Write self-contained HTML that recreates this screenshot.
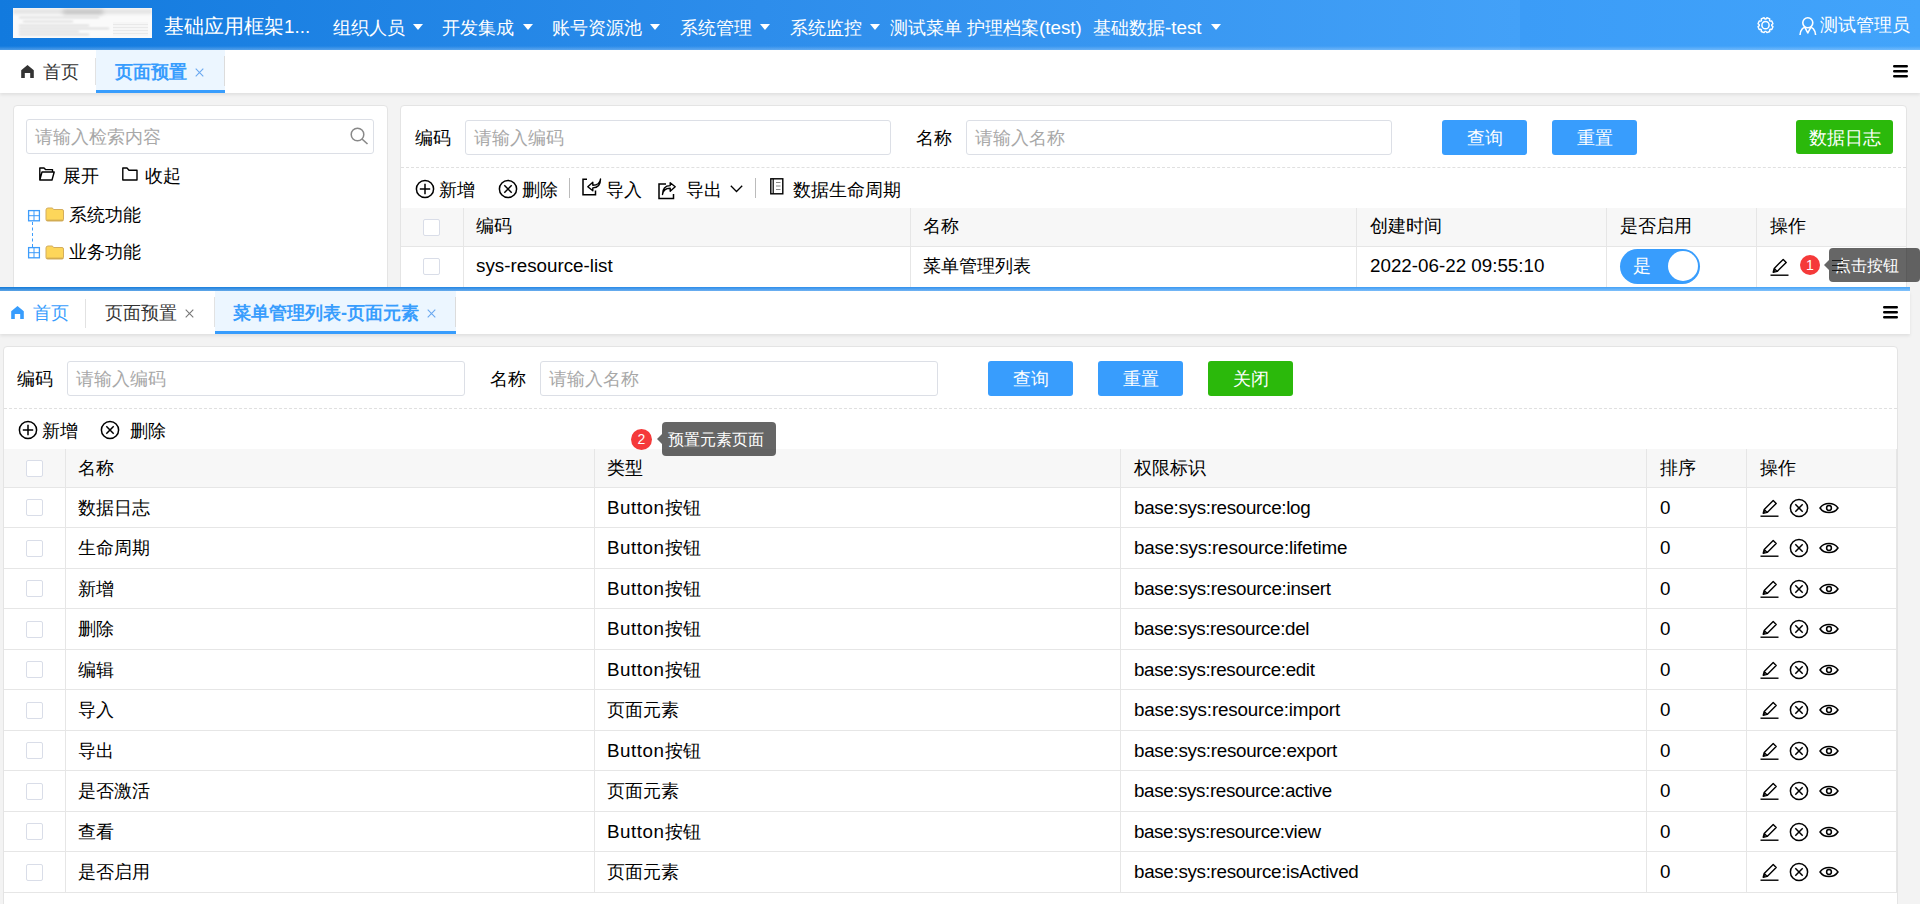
<!DOCTYPE html>
<html><head><meta charset="utf-8">
<style>
*{box-sizing:border-box;margin:0;padding:0}
html,body{width:1920px;height:904px;overflow:hidden;background:#f3f3f3;font-family:"Liberation Sans",sans-serif;font-size:18px;color:#000}
.a{position:absolute;white-space:nowrap}
.ic{position:absolute;overflow:visible}
#hdr{left:0;top:0;width:1920px;height:50px;background:linear-gradient(90deg,#127ade 0px,#2d8deb 760px,#43a1f8 1520px);z-index:3}
#hdr:after{content:'';position:absolute;left:0;top:46px;width:1920px;height:4px;background:linear-gradient(rgba(255,255,255,0),rgba(255,255,255,.25))}
.nav{color:#fff;font-size:18px;top:15.5px;line-height:24px}
.caret{position:absolute;width:0;height:0;border-left:5px solid transparent;border-right:5px solid transparent;border-top:6px solid #fff}
.tabbar{left:0;width:1920px;height:43px;background:#fff;box-shadow:0 2px 3px rgba(0,0,0,.08)}
.card{background:#fff;border:1px solid #e4e4e4;border-radius:4px}
.inp{background:#fff;border:1px solid #dcdfe6;border-radius:3px;height:35px;color:#a8a8a8;font-size:18px;line-height:35.5px;padding-left:7.5px}
.btn{color:#fff;border-radius:3px;height:35px;width:85px;text-align:center;line-height:37px;font-size:18px}
.blue{background:#389dfd}
.green{background:#2bb90b}
.dash{height:0;border-top:1px dashed #e0e0e0}
.th{background:#f7f7f7}
.hl{background:#e6e6e6;height:1px}
.vl{background:#e6e6e6;width:1px}
.cb{width:17px;height:17px;border:1px solid #d9dde8;border-radius:2px;background:#fff}
.tip{background:rgba(0,0,0,.6);color:#fff;border-radius:4px;font-size:16px;line-height:36px;height:34px}
.tip:before{content:'';position:absolute;left:-5px;top:12px;border-top:5px solid transparent;border-bottom:5px solid transparent;border-right:5px solid rgba(0,0,0,.6)}
.tx{line-height:24px;font-size:18px}
.lt{font-size:18.8px}
.badge{background:#f53a3a;color:#fff;border-radius:50%;text-align:center;font-size:14px}
</style></head><body>
<div id="hdr" class="a">
<div class="a" style="left:1520px;top:0;width:400px;height:50px;background:linear-gradient(90deg,#3b9cf7,#42a4fb)"></div>
<div class="a" style="left:13px;top:8px;width:139px;height:30px;background:#fafafa;overflow:hidden"><div class="a" style="left:0;top:1px;width:139px;height:5px;background:#e4e4e4;filter:blur(1.5px)"></div><div class="a" style="left:50px;top:2px;width:40px;height:4px;background:#bbb;filter:blur(2px)"></div><div class="a" style="left:6px;top:9px;width:80px;height:1px;background:#ccc;filter:blur(.8px)"></div><div class="a" style="left:10px;top:13px;width:50px;height:1px;background:#ccc;filter:blur(.8px)"></div><div class="a" style="left:6px;top:17px;width:70px;height:1px;background:#c8c8c8;filter:blur(.8px)"></div><div class="a" style="left:6px;top:20px;width:90px;height:1px;background:#c8c8c8;filter:blur(.8px)"></div><div class="a" style="left:6px;top:23px;width:60px;height:1px;background:#c8c8c8;filter:blur(.8px)"></div><div class="a" style="left:6px;top:26px;width:70px;height:1px;background:#c8c8c8;filter:blur(.8px)"></div><div class="a" style="left:100px;top:14px;width:35px;height:14px;background:repeating-linear-gradient(#f6f6f6 0 2px,#e9e9e9 2px 3px);filter:blur(.5px)"></div></div>
<div class="a nav" style="left:164px;font-size:20px;top:14px">基础应用框架<span class="lt">1...</span></div>
<div class="a nav" style="left:333px">组织人员</div>
<div class="caret" style="left:413px;top:24px"></div>
<div class="a nav" style="left:442px">开发集成</div>
<div class="caret" style="left:523px;top:24px"></div>
<div class="a nav" style="left:552px">账号资源池</div>
<div class="caret" style="left:650px;top:24px"></div>
<div class="a nav" style="left:680px">系统管理</div>
<div class="caret" style="left:760px;top:24px"></div>
<div class="a nav" style="left:790px">系统监控</div>
<div class="caret" style="left:870px;top:24px"></div>
<div class="a nav" style="left:890px">测试菜单 护理档案<span class="lt">(test)</span></div>
<div class="a nav" style="left:1093px">基础数据<span class="lt">-test</span></div>
<div class="caret" style="left:1211px;top:24px"></div>
<svg class="ic" style="left:1757px;top:17px" width="17" height="16" viewBox="0 0 17 16"><path d="M14.68 8.65 L15.96 9.66 L14.80 12.45 L13.19 12.25 L12.55 12.89 L12.75 14.50 L9.96 15.66 L8.95 14.38 L8.05 14.38 L7.04 15.66 L4.25 14.50 L4.45 12.89 L3.81 12.25 L2.20 12.45 L1.04 9.66 L2.32 8.65 L2.32 7.75 L1.04 6.74 L2.20 3.95 L3.81 4.15 L4.45 3.51 L4.25 1.90 L7.04 0.74 L8.05 2.02 L8.95 2.02 L9.96 0.74 L12.75 1.90 L12.55 3.51 L13.19 4.15 L14.80 3.95 L15.96 6.74 L14.68 7.75 Z" fill="none" stroke="#fff" stroke-width="1.4" stroke-linejoin="round"/><circle cx="8.5" cy="8.2" r="3.6" fill="none" stroke="#fff" stroke-width="1.5"/></svg>
<svg class="ic" style="left:1799px;top:17px" width="18" height="19" viewBox="0 0 18 19"><circle cx="8.8" cy="5.8" r="5" fill="none" stroke="#fff" stroke-width="1.6"/><path d="M1 18 C1.5 12 5 10 6 10.6 L8.8 16 L11.6 10.6 C12.6 10 16.1 12 16.6 18" fill="none" stroke="#fff" stroke-width="1.6" stroke-linejoin="round"/></svg>
<div class="a nav" style="left:1820px;top:13px">测试管理员</div>
</div>
<div class="a tabbar" style="top:50px;z-index:2">
<svg class="ic" style="left:21px;top:15px" width="13" height="13" viewBox="0 0 13 13"><path d="M0.2 5.2 L6.5 0 L12.8 5.2 V13 H9.2 V8 H3.8 V13 H0.2 Z" fill="#333"/></svg>
<div class="a tx" style="left:43px;top:10px;color:#333">首页</div>
<div class="a" style="left:95px;top:8px;width:1px;height:27px;background:#e2e2e2"></div>
<div class="a" style="left:96px;top:0;width:129px;height:43px;background:#ecf6ff;border-bottom:3px solid #389dfd"></div>
<div class="a tx" style="left:115px;top:10px;color:#389dfd;font-weight:bold">页面预置</div>
<div class="a" style="left:224px;top:6px;width:1px;height:30px;background:#dcdcdc"></div>
<svg class="ic" style="left:194.5px;top:17.7px" width="9" height="9" viewBox="0 0 9 9"><path d="M0.7 0.7 L8.3 8.3 M8.3 0.7 L0.7 8.3" stroke="#6aa8f0" stroke-width="1.1"/></svg>
<svg class="ic" style="left:1893px;top:15px" width="15" height="13" viewBox="0 0 15 13"><path d="M1.2 1.2 H13.8 M1.2 6.2 H13.8 M1.2 11.2 H13.8" stroke="#000" stroke-width="2.4" stroke-linecap="round"/></svg>
</div>
<div class="a card" style="left:13px;top:105px;width:375px;height:300px"></div>
<div class="a inp" style="left:26px;top:119px;width:348px">请输入检索内容</div>
<svg class="ic" style="left:350px;top:127px" width="18" height="18" viewBox="0 0 18 18"><circle cx="7.5" cy="7.5" r="6.3" fill="none" stroke="#888" stroke-width="1.5"/><path d="M12 12 L17.5 17" stroke="#888" stroke-width="1.6"/></svg>
<svg class="ic" style="left:39px;top:167px" width="16" height="14" viewBox="0 0 16 14"><path d="M0.8 13 V1 H5 L6.5 2.6 H13.5 V5 M0.8 13 L3 5 H15.2 L13 13 Z" fill="none" stroke="#000" stroke-width="1.4" stroke-linejoin="round"/></svg>
<div class="a tx" style="left:63px;top:164px;">展开</div>
<svg class="ic" style="left:122px;top:167px" width="16" height="14" viewBox="0 0 16 14"><path d="M0.8 13 V1 H5 L7 3.2 H15 V13 Z" fill="none" stroke="#000" stroke-width="1.4" stroke-linejoin="round"/></svg>
<div class="a tx" style="left:145px;top:164px;">收起</div>
<svg class="ic" style="left:28px;top:210px" width="12" height="11" viewBox="0 0 12 11"><rect x="0.6" y="0.6" width="10.8" height="10.2" fill="#fff" stroke="#3d9cfb" stroke-width="1.3"/><path d="M6 0.6 V10.8 M0.6 5.7 H11.4" stroke="#3d9cfb" stroke-width="1"/></svg>
<svg class="ic" style="left:28px;top:247px" width="12" height="11" viewBox="0 0 12 11"><rect x="0.6" y="0.6" width="10.8" height="10.2" fill="#fff" stroke="#3d9cfb" stroke-width="1.3"/><path d="M6 0.6 V10.8 M0.6 5.7 H11.4" stroke="#3d9cfb" stroke-width="1"/></svg>
<div class="a" style="left:32px;top:222px;width:0;height:25px;border-left:1px dashed #3d9cfb"></div>
<svg class="ic" style="left:45px;top:207px" width="19" height="15" viewBox="0 0 19 15"><path d="M1 3 Q1 1 3 1 H7 Q8 1 8.5 2.5 H17 Q18.5 2.5 18.5 4 V12.5 Q18.5 14 17 14 H2.5 Q1 14 1 12.5 Z" fill="#fdd65a" stroke="#d4ad5c" stroke-width="1"/><path d="M1.6 13.2 H18" stroke="#c9a24f" stroke-width="1"/></svg>
<svg class="ic" style="left:45px;top:245px" width="19" height="15" viewBox="0 0 19 15"><path d="M1 3 Q1 1 3 1 H7 Q8 1 8.5 2.5 H17 Q18.5 2.5 18.5 4 V12.5 Q18.5 14 17 14 H2.5 Q1 14 1 12.5 Z" fill="#fdd65a" stroke="#d4ad5c" stroke-width="1"/><path d="M1.6 13.2 H18" stroke="#c9a24f" stroke-width="1"/></svg>
<div class="a tx" style="left:69px;top:203px;">系统功能</div>
<div class="a tx" style="left:69px;top:240px;">业务功能</div>
<div class="a card" style="left:400px;top:105px;width:1507px;height:300px"></div>
<div class="a tx" style="left:415px;top:126px;">编码</div>
<div class="a inp" style="left:465px;top:120px;width:426px">请输入编码</div>
<div class="a tx" style="left:916px;top:126px;">名称</div>
<div class="a inp" style="left:966px;top:120px;width:426px">请输入名称</div>
<div class="a btn blue" style="left:1442px;top:120px">查询</div>
<div class="a btn blue" style="left:1552px;top:120px">重置</div>
<div class="a btn green" style="left:1796px;top:120px;width:97px;height:34px;line-height:36px">数据日志</div>
<div class="a dash" style="left:401px;top:167px;width:1505px"></div>
<svg class="ic" style="left:415px;top:179px" width="19" height="19" viewBox="0 0 19 19"><circle cx="10" cy="10" r="8.6" fill="none" stroke="#000" stroke-width="1.5"/><path d="M10 4.8 V15.2 M4.8 10 H15.2" stroke="#000" stroke-width="1.5"/></svg>
<div class="a tx" style="left:439px;top:177.5px;">新增</div>
<svg class="ic" style="left:498px;top:179px" width="19" height="19" viewBox="0 0 19 19"><circle cx="10" cy="10" r="8.6" fill="none" stroke="#000" stroke-width="1.5"/><path d="M6.3 6.3 L13.7 13.7 M13.7 6.3 L6.3 13.7" stroke="#000" stroke-width="1.5"/></svg>
<div class="a tx" style="left:522px;top:177.5px;">删除</div>
<div class="a" style="left:569px;top:178px;width:1px;height:20px;background:#bbb"></div>
<svg class="ic" style="left:582px;top:178px" width="19" height="18" viewBox="0 0 19 18"><path d="M5 1.2 H1 V16.8 H13.5 V12.5" fill="none" stroke="#000" stroke-width="1.5"/><path d="M4.5 12.5 C5 8 8 6.3 12.2 6.3 V9.2 L17.2 4.8 L12.2 0.8 V3.6 C7 3.6 4.5 7 4.5 12.5 Z" transform="translate(23,13.5) rotate(180)" fill="none" stroke="#000" stroke-width="1.4" stroke-linejoin="round"/></svg>
<div class="a tx" style="left:606px;top:177.5px;">导入</div>
<svg class="ic" style="left:658px;top:182px" width="18" height="17" viewBox="0 0 18 17"><path d="M8 2 H1 V16.5 H15.5 V12" fill="none" stroke="#000" stroke-width="1.5"/><path d="M4.5 12.5 C5 8 8 6.3 12.2 6.3 V9.2 L17.2 4.8 L12.2 0.8 V3.6 C7 3.6 4.5 7 4.5 12.5 Z" fill="none" stroke="#000" stroke-width="1.4" stroke-linejoin="round"/></svg>
<div class="a tx" style="left:686px;top:177.5px;">导出</div>
<svg class="ic" style="left:730px;top:185px" width="13" height="8" viewBox="0 0 13 8"><path d="M0.8 0.8 L6.5 6.5 L12.2 0.8" fill="none" stroke="#000" stroke-width="1.3"/></svg>
<div class="a" style="left:755px;top:178px;width:1px;height:20px;background:#bbb"></div>
<svg class="ic" style="left:770px;top:178px" width="14" height="17" viewBox="0 0 14 17"><rect x="0.8" y="0.8" width="12" height="15" fill="none" stroke="#000" stroke-width="1.4"/><path d="M3.2 0.8 V15.8" stroke="#000" stroke-width="1.2"/><path d="M6 4.5 H10.5 M6 8 H10.5 M6 11.5 H10.5" stroke="#888" stroke-width="1.2"/></svg>
<div class="a tx" style="left:793px;top:177.5px;">数据生命周期</div>
<div class="a th" style="left:401px;top:208px;width:1505px;height:39px"></div>
<div class="a hl" style="left:401px;top:246px;width:1505px"></div>
<div class="a vl" style="left:463px;top:208px;height:80px"></div>
<div class="a vl" style="left:910px;top:208px;height:80px"></div>
<div class="a vl" style="left:1356px;top:208px;height:80px"></div>
<div class="a vl" style="left:1606px;top:208px;height:80px"></div>
<div class="a vl" style="left:1756px;top:208px;height:80px"></div>
<div class="a cb" style="left:423px;top:219px"></div>
<div class="a cb" style="left:423px;top:258px"></div>
<div class="a tx" style="left:476px;top:214px;">编码</div>
<div class="a tx" style="left:923px;top:214px;">名称</div>
<div class="a tx" style="left:1370px;top:214px;">创建时间</div>
<div class="a tx" style="left:1620px;top:214px;">是否启用</div>
<div class="a tx" style="left:1770px;top:214px;">操作</div>
<div class="a tx" style="left:476px;top:254px;"><span class="lt">sys-resource-list</span></div>
<div class="a tx" style="left:923px;top:254px;">菜单管理列表</div>
<div class="a tx" style="left:1370px;top:254px;"><span class="lt">2022-06-22 09:55:10</span></div>
<div class="a" style="left:1620px;top:249px;width:80px;height:35px;border-radius:18px;background:#389dfd"></div>
<div class="a" style="left:1668px;top:251px;width:30px;height:30px;border-radius:50%;background:#fff"></div>
<div class="a tx" style="left:1633px;top:254px;color:#fff">是</div>
<svg class="ic" style="left:1769px;top:257px" width="20" height="20" viewBox="0 0 20 20"><path d="M4.2 15.2 L5.2 11.4 L14.2 2.4 L17.2 5.4 L8.2 14.4 Z M5.2 11.4 L8.2 14.4" fill="none" stroke="#000" stroke-width="1.4" stroke-linejoin="round"/><path d="M4.4 15 L5 12.6 L6.8 14.4 Z" fill="#000"/><line x1="1.5" y1="18.2" x2="19.5" y2="18.2" stroke="#000" stroke-width="1.4"/></svg>
<div class="a" style="left:1832px;top:259.5px;width:11px;height:12px;background:linear-gradient(#1a1a1a 0 1.3px,transparent 1.3px 5px,#1a1a1a 5px 6.3px,transparent 6.3px 10px,#1a1a1a 10px 11.3px,transparent 11.3px);z-index:1"></div>
<div class="a badge" style="left:1800px;top:255px;width:20px;height:20px;line-height:20px">1</div>
<div class="a tip" style="left:1829px;top:248px;width:91px;padding-left:6px">点击按钮</div>
<div class="a" style="left:0;top:287px;width:1910px;height:617px;background:#f3f3f3;border-top:4px solid #3f98e8"></div>
<div class="a tabbar" style="top:291px;width:1910px">
<svg class="ic" style="left:11px;top:15px" width="13" height="13" viewBox="0 0 13 13"><path d="M0.2 5.2 L6.5 0 L12.8 5.2 V13 H9.2 V8 H3.8 V13 H0.2 Z" fill="#389dfd"/></svg>
<div class="a tx" style="left:33px;top:10px;color:#389dfd">首页</div>
<div class="a" style="left:85px;top:8px;width:1px;height:29px;background:#e2e2e2"></div>
<div class="a tx" style="left:105px;top:10px;color:#333">页面预置</div>
<svg class="ic" style="left:184.5px;top:17.5px" width="9" height="9" viewBox="0 0 9 9"><path d="M0.7 0.7 L8.3 8.3 M8.3 0.7 L0.7 8.3" stroke="#777" stroke-width="1.1"/></svg>
<div class="a" style="left:214px;top:6px;width:1px;height:30px;background:#e2e2e2"></div>
<div class="a" style="left:215px;top:0;width:241px;height:43px;background:#ecf6ff;border-bottom:3px solid #389dfd"></div>
<div class="a tx" style="left:233px;top:10px;color:#389dfd;font-weight:bold">菜单管理列表-页面元素</div>
<div class="a" style="left:455px;top:6px;width:1px;height:30px;background:#dcdcdc"></div>
<svg class="ic" style="left:426.5px;top:17.5px" width="9" height="9" viewBox="0 0 9 9"><path d="M0.7 0.7 L8.3 8.3 M8.3 0.7 L0.7 8.3" stroke="#6aa8f0" stroke-width="1.1"/></svg>
<svg class="ic" style="left:1883px;top:15px" width="15" height="13" viewBox="0 0 15 13"><path d="M1.2 1.2 H13.8 M1.2 6.2 H13.8 M1.2 11.2 H13.8" stroke="#000" stroke-width="2.4" stroke-linecap="round"/></svg>
</div>
<div class="a card" style="left:3px;top:346px;width:1895px;height:600px"></div>
<div class="a tx" style="left:17px;top:366.5px;">编码</div>
<div class="a inp" style="left:67px;top:361px;width:398px">请输入编码</div>
<div class="a tx" style="left:490px;top:366.5px;">名称</div>
<div class="a inp" style="left:540px;top:361px;width:398px">请输入名称</div>
<div class="a btn blue" style="left:988px;top:361px">查询</div>
<div class="a btn blue" style="left:1098px;top:361px">重置</div>
<div class="a btn green" style="left:1208px;top:361px">关闭</div>
<div class="a dash" style="left:4px;top:408px;width:1893px"></div>
<svg class="ic" style="left:18px;top:420px" width="19" height="19" viewBox="0 0 19 19"><circle cx="10" cy="10" r="8.6" fill="none" stroke="#000" stroke-width="1.5"/><path d="M10 4.8 V15.2 M4.8 10 H15.2" stroke="#000" stroke-width="1.5"/></svg>
<div class="a tx" style="left:42px;top:418.5px;">新增</div>
<svg class="ic" style="left:100px;top:420px" width="19" height="19" viewBox="0 0 19 19"><circle cx="10" cy="10" r="8.6" fill="none" stroke="#000" stroke-width="1.5"/><path d="M6.3 6.3 L13.7 13.7 M13.7 6.3 L6.3 13.7" stroke="#000" stroke-width="1.5"/></svg>
<div class="a tx" style="left:130px;top:418.5px;">删除</div>
<div class="a th" style="left:4px;top:449px;width:1893px;height:38px"></div>
<div class="a hl" style="left:4px;top:487px;width:1893px"></div>
<div class="a hl" style="left:4px;top:527px;width:1893px"></div>
<div class="a hl" style="left:4px;top:568px;width:1893px"></div>
<div class="a hl" style="left:4px;top:608px;width:1893px"></div>
<div class="a hl" style="left:4px;top:649px;width:1893px"></div>
<div class="a hl" style="left:4px;top:689px;width:1893px"></div>
<div class="a hl" style="left:4px;top:730px;width:1893px"></div>
<div class="a hl" style="left:4px;top:770px;width:1893px"></div>
<div class="a hl" style="left:4px;top:811px;width:1893px"></div>
<div class="a hl" style="left:4px;top:851px;width:1893px"></div>
<div class="a hl" style="left:4px;top:892px;width:1893px"></div>
<div class="a vl" style="left:65px;top:449px;height:443px"></div>
<div class="a vl" style="left:594px;top:449px;height:443px"></div>
<div class="a vl" style="left:1120px;top:449px;height:443px"></div>
<div class="a vl" style="left:1646px;top:449px;height:443px"></div>
<div class="a vl" style="left:1746px;top:449px;height:443px"></div>
<div class="a vl" style="left:1896px;top:449px;height:443px"></div>
<div class="a cb" style="left:26px;top:459.5px"></div>
<div class="a tx" style="left:78px;top:456.0px;">名称</div>
<div class="a tx" style="left:607px;top:456.0px;">类型</div>
<div class="a tx" style="left:1134px;top:456.0px;">权限标识</div>
<div class="a tx" style="left:1660px;top:456.0px;">排序</div>
<div class="a tx" style="left:1760px;top:456.0px;">操作</div>
<div class="a cb" style="left:26px;top:499.0px"></div>
<div class="a tx" style="left:78px;top:495.5px;">数据日志</div>
<div class="a tx" style="left:607px;top:495.5px;"><span class="lt" style="letter-spacing:0.55px">Button</span>按钮</div>
<div class="a tx" style="left:1134px;top:495.5px;"><span class="lt" style="letter-spacing:-0.3px">base:sys:resource:log</span></div>
<div class="a tx" style="left:1660px;top:495.5px;font-family:"Liberation Serif",serif;font-size:19px"><span class="lt">0</span></div>
<svg class="ic" style="left:1759px;top:497.5px" width="20" height="20" viewBox="0 0 20 20"><path d="M4.2 15.2 L5.2 11.4 L14.2 2.4 L17.2 5.4 L8.2 14.4 Z M5.2 11.4 L8.2 14.4" fill="none" stroke="#000" stroke-width="1.4" stroke-linejoin="round"/><path d="M4.4 15 L5 12.6 L6.8 14.4 Z" fill="#000"/><line x1="1.5" y1="18.2" x2="19.5" y2="18.2" stroke="#000" stroke-width="1.4"/></svg>
<svg class="ic" style="left:1789px;top:497.5px" width="20" height="20" viewBox="0 0 20 20"><circle cx="10" cy="10" r="8.6" fill="none" stroke="#000" stroke-width="1.5"/><path d="M6.3 6.3 L13.7 13.7 M13.7 6.3 L6.3 13.7" stroke="#000" stroke-width="1.5"/></svg>
<svg class="ic" style="left:1819px;top:497.5px" width="20" height="20" viewBox="0 0 20 20"><path d="M1 10 C5 4 15 4 19 10 C15 16 5 16 1 10 Z" fill="none" stroke="#000" stroke-width="1.5" stroke-linejoin="round"/><circle cx="10" cy="10" r="2.4" fill="none" stroke="#000" stroke-width="1.5"/></svg>
<div class="a cb" style="left:26px;top:539.5px"></div>
<div class="a tx" style="left:78px;top:536.0px;">生命周期</div>
<div class="a tx" style="left:607px;top:536.0px;"><span class="lt" style="letter-spacing:0.55px">Button</span>按钮</div>
<div class="a tx" style="left:1134px;top:536.0px;"><span class="lt" style="letter-spacing:-0.148px">base:sys:resource:lifetime</span></div>
<div class="a tx" style="left:1660px;top:536.0px;font-family:"Liberation Serif",serif;font-size:19px"><span class="lt">0</span></div>
<svg class="ic" style="left:1759px;top:538.0px" width="20" height="20" viewBox="0 0 20 20"><path d="M4.2 15.2 L5.2 11.4 L14.2 2.4 L17.2 5.4 L8.2 14.4 Z M5.2 11.4 L8.2 14.4" fill="none" stroke="#000" stroke-width="1.4" stroke-linejoin="round"/><path d="M4.4 15 L5 12.6 L6.8 14.4 Z" fill="#000"/><line x1="1.5" y1="18.2" x2="19.5" y2="18.2" stroke="#000" stroke-width="1.4"/></svg>
<svg class="ic" style="left:1789px;top:538.0px" width="20" height="20" viewBox="0 0 20 20"><circle cx="10" cy="10" r="8.6" fill="none" stroke="#000" stroke-width="1.5"/><path d="M6.3 6.3 L13.7 13.7 M13.7 6.3 L6.3 13.7" stroke="#000" stroke-width="1.5"/></svg>
<svg class="ic" style="left:1819px;top:538.0px" width="20" height="20" viewBox="0 0 20 20"><path d="M1 10 C5 4 15 4 19 10 C15 16 5 16 1 10 Z" fill="none" stroke="#000" stroke-width="1.5" stroke-linejoin="round"/><circle cx="10" cy="10" r="2.4" fill="none" stroke="#000" stroke-width="1.5"/></svg>
<div class="a cb" style="left:26px;top:580.0px"></div>
<div class="a tx" style="left:78px;top:576.5px;">新增</div>
<div class="a tx" style="left:607px;top:576.5px;"><span class="lt" style="letter-spacing:0.55px">Button</span>按钮</div>
<div class="a tx" style="left:1134px;top:576.5px;"><span class="lt" style="letter-spacing:-0.283px">base:sys:resource:insert</span></div>
<div class="a tx" style="left:1660px;top:576.5px;font-family:"Liberation Serif",serif;font-size:19px"><span class="lt">0</span></div>
<svg class="ic" style="left:1759px;top:578.5px" width="20" height="20" viewBox="0 0 20 20"><path d="M4.2 15.2 L5.2 11.4 L14.2 2.4 L17.2 5.4 L8.2 14.4 Z M5.2 11.4 L8.2 14.4" fill="none" stroke="#000" stroke-width="1.4" stroke-linejoin="round"/><path d="M4.4 15 L5 12.6 L6.8 14.4 Z" fill="#000"/><line x1="1.5" y1="18.2" x2="19.5" y2="18.2" stroke="#000" stroke-width="1.4"/></svg>
<svg class="ic" style="left:1789px;top:578.5px" width="20" height="20" viewBox="0 0 20 20"><circle cx="10" cy="10" r="8.6" fill="none" stroke="#000" stroke-width="1.5"/><path d="M6.3 6.3 L13.7 13.7 M13.7 6.3 L6.3 13.7" stroke="#000" stroke-width="1.5"/></svg>
<svg class="ic" style="left:1819px;top:578.5px" width="20" height="20" viewBox="0 0 20 20"><path d="M1 10 C5 4 15 4 19 10 C15 16 5 16 1 10 Z" fill="none" stroke="#000" stroke-width="1.5" stroke-linejoin="round"/><circle cx="10" cy="10" r="2.4" fill="none" stroke="#000" stroke-width="1.5"/></svg>
<div class="a cb" style="left:26px;top:620.5px"></div>
<div class="a tx" style="left:78px;top:617.0px;">删除</div>
<div class="a tx" style="left:607px;top:617.0px;"><span class="lt" style="letter-spacing:0.55px">Button</span>按钮</div>
<div class="a tx" style="left:1134px;top:617.0px;"><span class="lt" style="letter-spacing:-0.365px">base:sys:resource:del</span></div>
<div class="a tx" style="left:1660px;top:617.0px;font-family:"Liberation Serif",serif;font-size:19px"><span class="lt">0</span></div>
<svg class="ic" style="left:1759px;top:619.0px" width="20" height="20" viewBox="0 0 20 20"><path d="M4.2 15.2 L5.2 11.4 L14.2 2.4 L17.2 5.4 L8.2 14.4 Z M5.2 11.4 L8.2 14.4" fill="none" stroke="#000" stroke-width="1.4" stroke-linejoin="round"/><path d="M4.4 15 L5 12.6 L6.8 14.4 Z" fill="#000"/><line x1="1.5" y1="18.2" x2="19.5" y2="18.2" stroke="#000" stroke-width="1.4"/></svg>
<svg class="ic" style="left:1789px;top:619.0px" width="20" height="20" viewBox="0 0 20 20"><circle cx="10" cy="10" r="8.6" fill="none" stroke="#000" stroke-width="1.5"/><path d="M6.3 6.3 L13.7 13.7 M13.7 6.3 L6.3 13.7" stroke="#000" stroke-width="1.5"/></svg>
<svg class="ic" style="left:1819px;top:619.0px" width="20" height="20" viewBox="0 0 20 20"><path d="M1 10 C5 4 15 4 19 10 C15 16 5 16 1 10 Z" fill="none" stroke="#000" stroke-width="1.5" stroke-linejoin="round"/><circle cx="10" cy="10" r="2.4" fill="none" stroke="#000" stroke-width="1.5"/></svg>
<div class="a cb" style="left:26px;top:661.0px"></div>
<div class="a tx" style="left:78px;top:657.5px;">编辑</div>
<div class="a tx" style="left:607px;top:657.5px;"><span class="lt" style="letter-spacing:0.55px">Button</span>按钮</div>
<div class="a tx" style="left:1134px;top:657.5px;"><span class="lt" style="letter-spacing:-0.333px">base:sys:resource:edit</span></div>
<div class="a tx" style="left:1660px;top:657.5px;font-family:"Liberation Serif",serif;font-size:19px"><span class="lt">0</span></div>
<svg class="ic" style="left:1759px;top:659.5px" width="20" height="20" viewBox="0 0 20 20"><path d="M4.2 15.2 L5.2 11.4 L14.2 2.4 L17.2 5.4 L8.2 14.4 Z M5.2 11.4 L8.2 14.4" fill="none" stroke="#000" stroke-width="1.4" stroke-linejoin="round"/><path d="M4.4 15 L5 12.6 L6.8 14.4 Z" fill="#000"/><line x1="1.5" y1="18.2" x2="19.5" y2="18.2" stroke="#000" stroke-width="1.4"/></svg>
<svg class="ic" style="left:1789px;top:659.5px" width="20" height="20" viewBox="0 0 20 20"><circle cx="10" cy="10" r="8.6" fill="none" stroke="#000" stroke-width="1.5"/><path d="M6.3 6.3 L13.7 13.7 M13.7 6.3 L6.3 13.7" stroke="#000" stroke-width="1.5"/></svg>
<svg class="ic" style="left:1819px;top:659.5px" width="20" height="20" viewBox="0 0 20 20"><path d="M1 10 C5 4 15 4 19 10 C15 16 5 16 1 10 Z" fill="none" stroke="#000" stroke-width="1.5" stroke-linejoin="round"/><circle cx="10" cy="10" r="2.4" fill="none" stroke="#000" stroke-width="1.5"/></svg>
<div class="a cb" style="left:26px;top:701.5px"></div>
<div class="a tx" style="left:78px;top:698.0px;">导入</div>
<div class="a tx" style="left:607px;top:698.0px;">页面元素</div>
<div class="a tx" style="left:1134px;top:698.0px;"><span class="lt" style="letter-spacing:-0.161px">base:sys:resource:import</span></div>
<div class="a tx" style="left:1660px;top:698.0px;font-family:"Liberation Serif",serif;font-size:19px"><span class="lt">0</span></div>
<svg class="ic" style="left:1759px;top:700.0px" width="20" height="20" viewBox="0 0 20 20"><path d="M4.2 15.2 L5.2 11.4 L14.2 2.4 L17.2 5.4 L8.2 14.4 Z M5.2 11.4 L8.2 14.4" fill="none" stroke="#000" stroke-width="1.4" stroke-linejoin="round"/><path d="M4.4 15 L5 12.6 L6.8 14.4 Z" fill="#000"/><line x1="1.5" y1="18.2" x2="19.5" y2="18.2" stroke="#000" stroke-width="1.4"/></svg>
<svg class="ic" style="left:1789px;top:700.0px" width="20" height="20" viewBox="0 0 20 20"><circle cx="10" cy="10" r="8.6" fill="none" stroke="#000" stroke-width="1.5"/><path d="M6.3 6.3 L13.7 13.7 M13.7 6.3 L6.3 13.7" stroke="#000" stroke-width="1.5"/></svg>
<svg class="ic" style="left:1819px;top:700.0px" width="20" height="20" viewBox="0 0 20 20"><path d="M1 10 C5 4 15 4 19 10 C15 16 5 16 1 10 Z" fill="none" stroke="#000" stroke-width="1.5" stroke-linejoin="round"/><circle cx="10" cy="10" r="2.4" fill="none" stroke="#000" stroke-width="1.5"/></svg>
<div class="a cb" style="left:26px;top:742.0px"></div>
<div class="a tx" style="left:78px;top:738.5px;">导出</div>
<div class="a tx" style="left:607px;top:738.5px;"><span class="lt" style="letter-spacing:0.55px">Button</span>按钮</div>
<div class="a tx" style="left:1134px;top:738.5px;"><span class="lt" style="letter-spacing:-0.287px">base:sys:resource:export</span></div>
<div class="a tx" style="left:1660px;top:738.5px;font-family:"Liberation Serif",serif;font-size:19px"><span class="lt">0</span></div>
<svg class="ic" style="left:1759px;top:740.5px" width="20" height="20" viewBox="0 0 20 20"><path d="M4.2 15.2 L5.2 11.4 L14.2 2.4 L17.2 5.4 L8.2 14.4 Z M5.2 11.4 L8.2 14.4" fill="none" stroke="#000" stroke-width="1.4" stroke-linejoin="round"/><path d="M4.4 15 L5 12.6 L6.8 14.4 Z" fill="#000"/><line x1="1.5" y1="18.2" x2="19.5" y2="18.2" stroke="#000" stroke-width="1.4"/></svg>
<svg class="ic" style="left:1789px;top:740.5px" width="20" height="20" viewBox="0 0 20 20"><circle cx="10" cy="10" r="8.6" fill="none" stroke="#000" stroke-width="1.5"/><path d="M6.3 6.3 L13.7 13.7 M13.7 6.3 L6.3 13.7" stroke="#000" stroke-width="1.5"/></svg>
<svg class="ic" style="left:1819px;top:740.5px" width="20" height="20" viewBox="0 0 20 20"><path d="M1 10 C5 4 15 4 19 10 C15 16 5 16 1 10 Z" fill="none" stroke="#000" stroke-width="1.5" stroke-linejoin="round"/><circle cx="10" cy="10" r="2.4" fill="none" stroke="#000" stroke-width="1.5"/></svg>
<div class="a cb" style="left:26px;top:782.5px"></div>
<div class="a tx" style="left:78px;top:779.0px;">是否激活</div>
<div class="a tx" style="left:607px;top:779.0px;">页面元素</div>
<div class="a tx" style="left:1134px;top:779.0px;"><span class="lt" style="letter-spacing:-0.374px">base:sys:resource:active</span></div>
<div class="a tx" style="left:1660px;top:779.0px;font-family:"Liberation Serif",serif;font-size:19px"><span class="lt">0</span></div>
<svg class="ic" style="left:1759px;top:781.0px" width="20" height="20" viewBox="0 0 20 20"><path d="M4.2 15.2 L5.2 11.4 L14.2 2.4 L17.2 5.4 L8.2 14.4 Z M5.2 11.4 L8.2 14.4" fill="none" stroke="#000" stroke-width="1.4" stroke-linejoin="round"/><path d="M4.4 15 L5 12.6 L6.8 14.4 Z" fill="#000"/><line x1="1.5" y1="18.2" x2="19.5" y2="18.2" stroke="#000" stroke-width="1.4"/></svg>
<svg class="ic" style="left:1789px;top:781.0px" width="20" height="20" viewBox="0 0 20 20"><circle cx="10" cy="10" r="8.6" fill="none" stroke="#000" stroke-width="1.5"/><path d="M6.3 6.3 L13.7 13.7 M13.7 6.3 L6.3 13.7" stroke="#000" stroke-width="1.5"/></svg>
<svg class="ic" style="left:1819px;top:781.0px" width="20" height="20" viewBox="0 0 20 20"><path d="M1 10 C5 4 15 4 19 10 C15 16 5 16 1 10 Z" fill="none" stroke="#000" stroke-width="1.5" stroke-linejoin="round"/><circle cx="10" cy="10" r="2.4" fill="none" stroke="#000" stroke-width="1.5"/></svg>
<div class="a cb" style="left:26px;top:823.0px"></div>
<div class="a tx" style="left:78px;top:819.5px;">查看</div>
<div class="a tx" style="left:607px;top:819.5px;"><span class="lt" style="letter-spacing:0.55px">Button</span>按钮</div>
<div class="a tx" style="left:1134px;top:819.5px;"><span class="lt" style="letter-spacing:-0.39px">base:sys:resource:view</span></div>
<div class="a tx" style="left:1660px;top:819.5px;font-family:"Liberation Serif",serif;font-size:19px"><span class="lt">0</span></div>
<svg class="ic" style="left:1759px;top:821.5px" width="20" height="20" viewBox="0 0 20 20"><path d="M4.2 15.2 L5.2 11.4 L14.2 2.4 L17.2 5.4 L8.2 14.4 Z M5.2 11.4 L8.2 14.4" fill="none" stroke="#000" stroke-width="1.4" stroke-linejoin="round"/><path d="M4.4 15 L5 12.6 L6.8 14.4 Z" fill="#000"/><line x1="1.5" y1="18.2" x2="19.5" y2="18.2" stroke="#000" stroke-width="1.4"/></svg>
<svg class="ic" style="left:1789px;top:821.5px" width="20" height="20" viewBox="0 0 20 20"><circle cx="10" cy="10" r="8.6" fill="none" stroke="#000" stroke-width="1.5"/><path d="M6.3 6.3 L13.7 13.7 M13.7 6.3 L6.3 13.7" stroke="#000" stroke-width="1.5"/></svg>
<svg class="ic" style="left:1819px;top:821.5px" width="20" height="20" viewBox="0 0 20 20"><path d="M1 10 C5 4 15 4 19 10 C15 16 5 16 1 10 Z" fill="none" stroke="#000" stroke-width="1.5" stroke-linejoin="round"/><circle cx="10" cy="10" r="2.4" fill="none" stroke="#000" stroke-width="1.5"/></svg>
<div class="a cb" style="left:26px;top:863.5px"></div>
<div class="a tx" style="left:78px;top:860.0px;">是否启用</div>
<div class="a tx" style="left:607px;top:860.0px;">页面元素</div>
<div class="a tx" style="left:1134px;top:860.0px;"><span class="lt" style="letter-spacing:-0.308px">base:sys:resource:isActived</span></div>
<div class="a tx" style="left:1660px;top:860.0px;font-family:"Liberation Serif",serif;font-size:19px"><span class="lt">0</span></div>
<svg class="ic" style="left:1759px;top:862.0px" width="20" height="20" viewBox="0 0 20 20"><path d="M4.2 15.2 L5.2 11.4 L14.2 2.4 L17.2 5.4 L8.2 14.4 Z M5.2 11.4 L8.2 14.4" fill="none" stroke="#000" stroke-width="1.4" stroke-linejoin="round"/><path d="M4.4 15 L5 12.6 L6.8 14.4 Z" fill="#000"/><line x1="1.5" y1="18.2" x2="19.5" y2="18.2" stroke="#000" stroke-width="1.4"/></svg>
<svg class="ic" style="left:1789px;top:862.0px" width="20" height="20" viewBox="0 0 20 20"><circle cx="10" cy="10" r="8.6" fill="none" stroke="#000" stroke-width="1.5"/><path d="M6.3 6.3 L13.7 13.7 M13.7 6.3 L6.3 13.7" stroke="#000" stroke-width="1.5"/></svg>
<svg class="ic" style="left:1819px;top:862.0px" width="20" height="20" viewBox="0 0 20 20"><path d="M1 10 C5 4 15 4 19 10 C15 16 5 16 1 10 Z" fill="none" stroke="#000" stroke-width="1.5" stroke-linejoin="round"/><circle cx="10" cy="10" r="2.4" fill="none" stroke="#000" stroke-width="1.5"/></svg>
<div class="a badge" style="left:631px;top:429px;width:21px;height:21px;line-height:21px">2</div>
<div class="a tip" style="left:662px;top:422px;width:114px;padding-left:6px">预置元素页面</div>
<div class="a" style="left:0;top:287px;width:1910px;height:4px;background:linear-gradient(rgba(255,255,255,0),rgba(255,255,255,.32)),linear-gradient(90deg,#137ad9,#2d8deb 760px,#43a1f8 1520px,#4aa6f8 1910px);z-index:5"></div>
</body></html>
